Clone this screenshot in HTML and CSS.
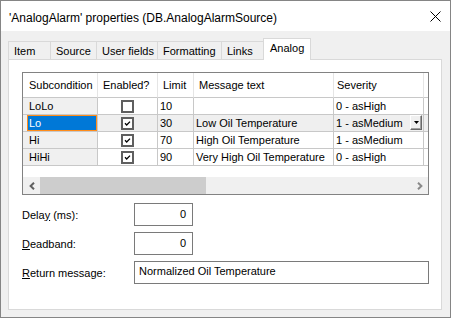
FILE: index.html
```html
<!DOCTYPE html>
<html lang="en">
<head>
    <meta charset="UTF-8">
    <meta name="viewport" content="width=device-width, initial-scale=1.0">
    <title>AnalogAlarm properties</title>
    <link rel="stylesheet" href="styles.css">
</head>
<body>
    <div class="window">
        <div class="titlebar">
            <span class="title">'AnalogAlarm' properties (DB.AnalogAlarmSource)</span>
            <svg class="close" width="11" height="11" viewBox="0 0 11 11">
                <path d="M0.5 0.5 L10.5 10.5 M10.5 0.5 L0.5 10.5" stroke="#000" stroke-width="1" fill="none"/>
            </svg>
        </div>

        <div class="tabs">
            <div class="tab tab-item">Item</div>
            <div class="tab tab-source">Source</div>
            <div class="tab tab-user">User fields</div>
            <div class="tab tab-format">Formatting</div>
            <div class="tab tab-links">Links</div>
            <div class="tab tab-analog active">Analog</div>
        </div>

        <div class="panel">
            <div class="grid">
                <div class="grid-cells">
                    <!-- header -->
                    <div class="cell head first">Subcondition</div>
                    <div class="cell head">Enabled?</div>
                    <div class="cell head">Limit</div>
                    <div class="cell head">Message text</div>
                    <div class="cell head sev">Severity</div>
                    <div class="cell head last"></div>

                    <!-- LoLo -->
                    <div class="cell first">LoLo</div>
                    <div class="cell center"><span class="check"></span></div>
                    <div class="cell">10</div>
                    <div class="cell"></div>
                    <div class="cell">0 - asHigh</div>
                    <div class="cell last"></div>

                    <!-- Lo (selected) -->
                    <div class="cell first selected"><div class="sel-box">Lo</div></div>
                    <div class="cell center row-sel"><span class="check">
                        <svg width="9" height="9" viewBox="0 0 9 9"><path d="M2 4.3 L3.7 6 L7 2.6" stroke="#000" stroke-width="1.3" fill="none"/></svg>
                    </span></div>
                    <div class="cell row-sel">30</div>
                    <div class="cell row-sel">Low Oil Temperature</div>
                    <div class="cell row-sel combo">1 - asMedium
                        <span class="drop">
                            <svg width="5" height="3" viewBox="0 0 5 3"><path d="M0 0 H5 L2.5 3 Z" fill="#000"/></svg>
                        </span>
                    </div>
                    <div class="cell last row-sel"></div>

                    <!-- Hi -->
                    <div class="cell first">Hi</div>
                    <div class="cell center"><span class="check">
                        <svg width="9" height="9" viewBox="0 0 9 9"><path d="M2 4.3 L3.7 6 L7 2.6" stroke="#000" stroke-width="1.3" fill="none"/></svg>
                    </span></div>
                    <div class="cell">70</div>
                    <div class="cell">High Oil Temperature</div>
                    <div class="cell">1 - asMedium</div>
                    <div class="cell last"></div>

                    <!-- HiHi -->
                    <div class="cell first">HiHi</div>
                    <div class="cell center"><span class="check">
                        <svg width="9" height="9" viewBox="0 0 9 9"><path d="M2 4.3 L3.7 6 L7 2.6" stroke="#000" stroke-width="1.3" fill="none"/></svg>
                    </span></div>
                    <div class="cell">90</div>
                    <div class="cell">Very High Oil Temperature</div>
                    <div class="cell">0 - asHigh</div>
                    <div class="cell last"></div>
                </div>

                <div class="grid-filler"></div>

                <div class="hscroll">
                    <div class="sb-btn">
                        <svg width="6" height="8" viewBox="0 0 6 8"><path d="M5 0.7 L1.6 4 L5 7.3" stroke="#606060" stroke-width="2" fill="none"/></svg>
                    </div>
                    <div class="sb-thumb"></div>
                    <div class="sb-track"></div>
                    <div class="sb-btn">
                        <svg width="6" height="8" viewBox="0 0 6 8"><path d="M1 0.7 L4.4 4 L1 7.3" stroke="#8a8a8a" stroke-width="2" fill="none"/></svg>
                    </div>
                </div>
            </div>

            <div class="field">
                <label>Dela<u>y</u> (ms):</label>
                <div class="box num">0</div>
            </div>
            <div class="field">
                <label><u>D</u>eadband:</label>
                <div class="box num">0</div>
            </div>
            <div class="field">
                <label><u>R</u>eturn message:</label>
                <div class="box wide">Normalized Oil Temperature</div>
            </div>
        </div>
    </div>
</body>
</html>
```

FILE: styles.css
```css
body {
    margin: 0;
    font-family: 'Liberation Sans', Arial, sans-serif;
    font-size: 11px;
    color: #000;
}
.window {
    width: 451px;
    height: 318px;
    box-sizing: border-box;
    border: 1px solid #858585;
    background: #f0f0f0;
}
.titlebar {
    height: 30px;
    background: #fff;
    display: flex;
    align-items: center;
    padding: 0 9px 0 8px;
}
.title {
    font-size: 12px;
    padding-top: 3px;
}
.close {
    margin-left: auto;
    margin-top: 1px;
}

/* tabs */
.tabs {
    height: 28px;
    display: flex;
    align-items: flex-end;
    padding-left: 7px;
}
.tab {
    height: 18px;
    box-sizing: border-box;
    border: 1px solid #d9d9d9;
    border-bottom: none;
    margin-left: -1px;
    padding-left: 5px;
    line-height: 18px;
    background: #f0f0f0;
}
.tab-item { width: 43px; margin-left: 0; }
.tab-source { width: 47px; }
.tab-user { width: 62px; }
.tab-format { width: 65px; }
.tab-links { width: 43px; }
.tab-analog { width: 48px; }
.tab.active {
    height: 22px;
    background: #fff;
    line-height: 18px;
    padding-left: 6px;
    margin-bottom: -1px;
    position: relative;
}

/* panel */
.panel {
    margin-left: 7px;
    width: 434px;
    height: 251px;
    box-sizing: border-box;
    border: 1px solid #d9d9d9;
    background: #fff;
    padding: 12px 12px 0 13px;
}
.grid {
    width: 407px;
    height: 123px;
    box-sizing: border-box;
    border: 1px solid #828282;
}
.grid-cells {
    display: grid;
    grid-template-columns: 75px 60px 36px 140px 90px 4px;
}
.cell {
    height: 17px;
    box-sizing: border-box;
    border-right: 1px solid #c8c8c8;
    border-bottom: 1px solid #c8c8c8;
    line-height: 16px;
    padding-left: 2px;
    white-space: nowrap;
    overflow: hidden;
}
.cell.head {
    height: 25px;
    line-height: 24px;
    padding-left: 5px;
    border-right-color: #e5e5e5;
}
.cell.head.sev {
    padding-left: 3px;
}
.cell.first {
    padding-left: 6px;
    background: #f0f0f0;
}
.cell.head.first {
    background: #fff;
}
.cell.last {
    border-right: none;
    padding: 0;
}
.cell.center {
    display: flex;
    align-items: center;
    justify-content: center;
    padding: 0;
}
.row-sel {
    background: #efefef;
}
.cell.selected {
    padding-left: 4px;
}
.sel-box {
    height: 16px;
    box-sizing: border-box;
    background: #0078d7;
    border: 1px solid #ff8c1a;
    color: #fff;
    padding-left: 1px;
    line-height: 14px;
}
.check {
    width: 13px;
    height: 13px;
    box-sizing: border-box;
    border: 2px solid #5f5f5f;
    background: #fff;
    display: flex;
    align-items: center;
    justify-content: center;
}
.cell.combo {
    display: flex;
    align-items: flex-start;
}
.drop {
    margin-left: auto;
    margin-right: 1px;
    width: 12px;
    height: 15px;
    box-sizing: border-box;
    background: #f0f0f0;
    border-top: 1px solid #fff;
    border-left: 1px solid #fff;
    border-right: 1px solid #696969;
    border-bottom: 1px solid #696969;
    box-shadow: inset -1px -1px 0 #a0a0a0;
    display: flex;
    align-items: center;
    justify-content: center;
}
.grid-filler {
    height: 11px;
}

/* horizontal scrollbar */
.hscroll {
    height: 17px;
    display: flex;
    background: #f0f0f0;
}
.sb-btn {
    width: 17px;
    display: flex;
    align-items: center;
    justify-content: center;
}
.sb-thumb {
    width: 166px;
    background: #cdcdcd;
}
.sb-track {
    flex: 1;
}

/* fields below the grid */
.field {
    display: flex;
    align-items: center;
    margin-top: 6px;
}
.grid + .field {
    margin-top: 8px;
}
.field label {
    width: 112px;
}
.box {
    height: 23px;
    box-sizing: border-box;
    border: 1px solid #7a7a7a;
    background: #fff;
    line-height: 20px;
}
.box.num {
    width: 59px;
    text-align: right;
    padding-right: 6px;
}
.box.wide {
    width: 295px;
    padding-left: 4px;
    line-height: 18px;
}
```
